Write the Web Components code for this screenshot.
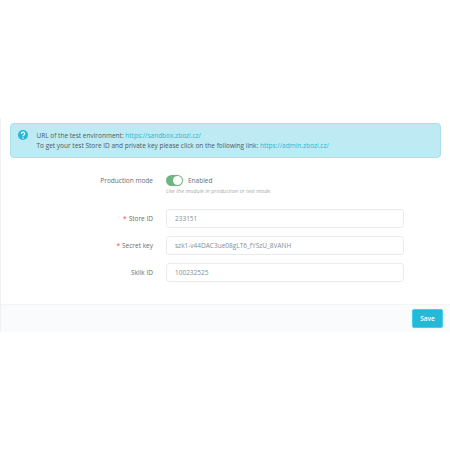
<!DOCTYPE html>
<html><head><meta charset="utf-8"><style>
html,body{margin:0;padding:0;background:#fff;width:450px;height:450px;overflow:hidden}
body{font-family:"Open Sans",sans-serif;font-size:6.5px;color:#6c868e}
x-alert a{color:#25b9d7;text-decoration:none}
</style></head><body>
<template id="t-panel"><style>
:host{display:block;margin-top:118px;border-left:1px solid #f0f1f2;height:213.5px;box-sizing:border-box}
.body{height:186px;box-sizing:border-box;padding:5px 9px 0 8.5px}
.foot{height:27.5px;box-sizing:border-box;background:#fafbfc;border-top:1px solid #f2f4f5;display:flex;justify-content:flex-end;align-items:center;padding:0 7px 0 0}
.form{display:flex;flex-direction:column;margin-top:17px}
</style><div class="body"><slot name="alert"></slot><div class="form"><slot></slot></div></div><div class="foot"><slot name="foot"></slot></div></template>
<template id="t-alert"><style>
:host{display:flex;box-sizing:border-box;height:35px;background:#beeaf3;border:1px solid #a8e0ec;border-radius:4px;padding:7px 0 0 7px;gap:9px;color:#4c5b60;line-height:9.5px;font-size:6.5px}
svg{width:10px;height:10px;flex:none;margin-top:-1px}
</style><svg viewBox="0 0 24 24"><circle cx="12" cy="12" r="12" fill="#25b9d7"/><path d="M8 9.3a4 4 0 0 1 8 0c0 2.7-4 3-4 5.7" fill="none" stroke="#fff" stroke-width="3"/><circle cx="12" cy="19" r="1.9" fill="#fff"/></svg><div><slot></slot></div></template>
<template id="t-row"><style>
:host{display:flex;align-items:center;height:19px;margin-bottom:8px}
.l{width:143.5px;text-align:right;color:#5f6f74;white-space:nowrap;flex:none;padding-right:13px;box-sizing:content-box}
.r{width:238px}
.req{color:#f54c3e;margin-right:2px}
</style><div class="l"><span class="req" part="req"></span><slot name="label"></slot></div><div class="r"><slot></slot></div></template>
<template id="t-input"><style>
:host{display:block;box-sizing:border-box;height:19px;border:1px solid #e9ecee;border-radius:3px;background:#fff;padding:0 8px;line-height:17px;color:#7d9198;font-size:6.5px;white-space:nowrap;overflow:hidden}
</style><slot></slot></template>
<template id="t-switch"><style>
:host{display:flex;flex-direction:column;gap:1px}
.a{display:flex;align-items:center;gap:5px;color:#5f6f74}
.t{width:17px;height:11px;border-radius:6px;background:#70b580;position:relative;display:block}
.t i{position:absolute;right:1px;top:1px;width:9px;height:9px;border-radius:50%;background:#fff}
.h{font-style:italic;font-size:5.5px;color:#a3aeb2;white-space:nowrap;line-height:9px}
</style><div class="a"><span class="t"><i></i></span><slot></slot></div><div class="h"><slot name="help"></slot></div></template>
<template id="t-btn"><style>
:host{display:block;box-sizing:border-box;width:31px;height:19px;background:#25b9d7;border:1px solid #3ed2f0;border-radius:2px;color:#fff;text-align:center;line-height:17px;font-weight:600;font-size:6.5px}
</style><slot></slot></template>
<x-panel>
<x-alert slot="alert"><div>URL of the test environment: <a href="#">https://sandbox.zbozi.cz/</a></div><div>To get your test Store ID and private key please click on the following link: <a href="#">https://admin.zbozi.cz/</a></div></x-alert>
<x-row style="height:34px;margin-bottom:0;align-items:flex-start"><span slot="label" style="line-height:11px">Production mode</span><x-switch>Enabled<span slot="help">Use the module in production or test mode.</span></x-switch></x-row>
<x-row req="1"><span slot="label">Store ID</span><x-input>233151</x-input></x-row>
<x-row req="1"><span slot="label">Secret key</span><x-input>szk1-v44DAC3ue08gLT6_fYSzU_8VANH</x-input></x-row>
<x-row><span slot="label">Sklik ID</span><x-input>100232525</x-input></x-row>
<x-btn slot="foot">Save</x-btn>
</x-panel>
<script>
for(const n of ['panel','alert','row','input','switch','btn']){
customElements.define('x-'+n,class extends HTMLElement{constructor(){super();this.attachShadow({mode:'open'}).appendChild(document.getElementById('t-'+n).content.cloneNode(true));}
connectedCallback(){if(n==='row'&&this.hasAttribute('req'))this.shadowRoot.querySelector('.req').textContent='*';}});
}
</script>
</body></html>
